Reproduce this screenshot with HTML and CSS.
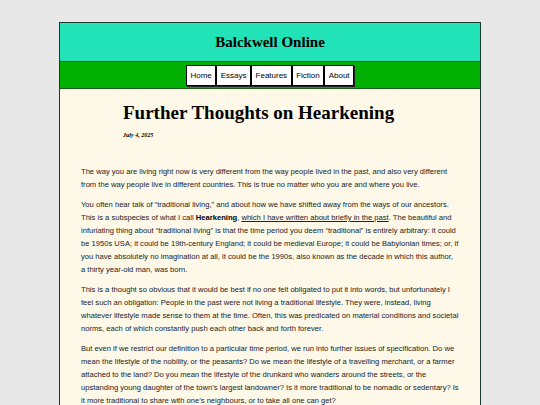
FILE: index.html
```html
<!DOCTYPE html>
<html lang="en">
<head>
<meta charset="utf-8">
<title>Balckwell Online</title>
<link rel="stylesheet" href="styles.css">
</head>
<body>
<div class="site">
  <header class="masthead">
    <h1 class="site-title">Balckwell Online</h1>
  </header>
  <nav class="nav">
    <a class="nav-link" href="#">Home</a>
    <a class="nav-link" href="#">Essays</a>
    <a class="nav-link" href="#">Features</a>
    <a class="nav-link" href="#">Fiction</a>
    <a class="nav-link" href="#">About</a>
  </nav>
  <main class="article">
    <div class="article-head">
      <h2 class="article-title">Further Thoughts on Hearkening</h2>
      <p class="article-date">July 4, 2025</p>
    </div>
    <p>The way you are living right now is very different from the way people lived in the past, and also very different from the way people live in different countries. This is true no matter who you are and where you live.</p>
    <p>You often hear talk of “traditional living,” and about how we have shifted away from the ways of our ancestors. This is a subspecies of what I call <strong>Hearkening</strong>, <a class="link" href="#">which I have written about briefly in the past</a>. The beautiful and infuriating thing about “traditional living” is that the time period you deem “traditional” is entirely arbitrary: it could be 1950s USA; it could be 19th-century England; it could be medieval Europe; it could be Babylonian times; or, if you have absolutely no imagination at all, it could be the 1990s, also known as the decade in which this author, a thirty year-old man, was born.</p>
    <p>This is a thought so obvious that it would be best if no one felt obligated to put it into words, but unfortunately I feel such an obligation: People in the past were not living a traditional lifestyle. They were, instead, living whatever lifestyle made sense to them at the time. Often, this was predicated on material conditions and societal norms, each of which constantly push each other back and forth forever.</p>
    <p>But even if we restrict our definition to a particular time period, we run into further issues of specification. Do we mean the lifestyle of the nobility, or the peasants? Do we mean the lifestyle of a travelling merchant, or a farmer attached to the land? Do you mean the lifestyle of the drunkard who wanders around the streets, or the upstanding young daughter of the town’s largest landowner? Is it more traditional to be nomadic or sedentary? Is it more traditional to share with one’s neighbours, or to take all one can get?</p>
  </main>
</div>
</body>
</html>
```
FILE: styles.css
```css
html, body {
  margin: 0;
  padding: 0;
}
body {
  background: #e8e8e8;
  padding-top: 22px;
}
.site {
  width: 420px;
  margin: 0 auto;
  border: 1px solid #1c3a2c;
  background: #fdf8e8;
}
.masthead {
  background: #22e2b8;
  height: 38px;
  display: flex;
  align-items: center;
  justify-content: center;
  border-bottom: 1px solid #0f5a3c;
}
.site-title {
  margin: 0;
  font-family: "Liberation Serif", serif;
  font-weight: bold;
  font-size: 15px;
  color: #000;
}
.nav {
  background: #00b000;
  height: 27px;
  box-sizing: border-box;
  padding-bottom: 2px;
  display: flex;
  align-items: flex-end;
  justify-content: center;
  border-bottom: 1px solid #1b5e1b;
}
.nav-link {
  background: #fff;
  border: 1px solid #000;
  box-shadow: 1px 1px 0 #222;
  font-family: "Liberation Sans", Arial, sans-serif;
  font-size: 8px;
  color: #000;
  text-decoration: none;
  padding: 5px 3.5px 4px;
  line-height: 10px;
}
.article {
  padding: 1px 21px 20px;
  font-family: "Liberation Sans", Arial, sans-serif;
  font-size: 7.6px;
  line-height: 13px;
  color: #222;
}
.article-head {
  padding-left: 42px;
}
.article .article-title {
  font-family: "Liberation Serif", serif;
  font-size: 19px;
  font-weight: bold;
  color: #000;
  margin: 11px 0 0;
  line-height: 24px;
}
.article .article-date {
  font-family: "Liberation Serif", serif;
  font-style: italic;
  font-weight: bold;
  font-size: 6px;
  color: #000;
  margin: 4px 0 23px;
}
.article p {
  margin: 0 0 7px;
  text-wrap: pretty;
}
.article strong {
  color: #000;
}
.link {
  color: #222;
  text-decoration: underline;
}
```
